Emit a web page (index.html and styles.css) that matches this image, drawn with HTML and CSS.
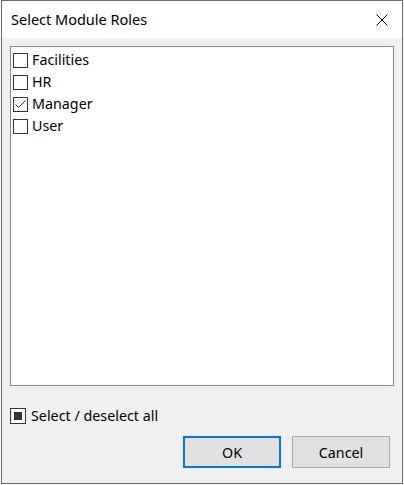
FILE: index.html
```html
<!DOCTYPE html>
<html>
<head>
<meta charset="utf-8">
<link rel="stylesheet" href="styles.css">
</head>
<body>
<div class="window">
  <div class="titlebar">
    <span class="title">Select Module Roles</span>
    <svg class="close" width="12" height="12" viewBox="0 0 12 12"><path d="M0.5 0.5 L11.5 11.5 M11.5 0.5 L0.5 11.5" stroke="#000" stroke-width="1" fill="none"/></svg>
  </div>
  <div class="content">
    <div class="listbox">
      <div class="item"><span class="box"></span><span class="label">Facilities</span></div>
      <div class="item"><span class="box"></span><span class="label">HR</span></div>
      <div class="item"><span class="box"><svg width="13" height="13" viewBox="0 0 13 13"><path d="M1.5 6.5 L4.5 9.5 L11.5 2.5" stroke="#333" stroke-width="1" fill="none"/></svg></span><span class="label">Manager</span></div>
      <div class="item"><span class="box"></span><span class="label">User</span></div>
    </div>
    <div class="selectall"><span class="box partial"><span class="fill"></span></span><span class="label">Select / deselect all</span></div>
    <div class="buttons">
      <div class="btn default">OK</div>
      <div class="btn">Cancel</div>
    </div>
  </div>
</div>
</body>
</html>
```
FILE: styles.css
```css
html, body {
  margin: 0;
  padding: 0;
  background: #ffffff;
}
body {
  font-family: "Noto Sans", "Open Sans", sans-serif;
  font-size: 14.3px;
  color: #000;
}
.window {
  margin-left: 1px;
  width: 402px;
  height: 484px;
  box-sizing: border-box;
  border: 1px solid #6a6a6a;
  background: #f0f0f0;
  display: flex;
  flex-direction: column;
}
.titlebar {
  height: 37px;
  background: #fff;
  display: flex;
  align-items: center;
  justify-content: space-between;
  padding: 0 14px 0 9px;
}
.title {
  font-size: 14.5px;
  line-height: 1;
}
.close { display: block; }
.content {
  padding: 8px 8px 0 8px;
  display: flex;
  flex-direction: column;
}
.listbox {
  height: 340px;
  box-sizing: border-box;
  border: 1px solid #828790;
  background: #fff;
  padding: 2px 2px;
}
.item {
  height: 22px;
  display: flex;
  align-items: center;
}
.box {
  width: 15px;
  height: 15px;
  box-sizing: border-box;
  border: 1px solid #333;
  background: #fff;
  display: flex;
  align-items: center;
  justify-content: center;
  flex: none;
}
.label {
  margin-left: 4px;
  line-height: 1;
}
.selectall {
  margin-top: 22px;
  display: flex;
  align-items: center;
  height: 16px;
}
.selectall .box {
  width: 16px;
  height: 16px;
}
.fill {
  width: 8px;
  height: 8px;
  background: #333;
}
.selectall .label { margin-left: 5px; }
.buttons {
  margin-top: 12px;
  display: flex;
  justify-content: flex-end;
  gap: 11px;
  padding-right: 4px;
}
.btn {
  width: 98px;
  height: 32px;
  box-sizing: border-box;
  border: 1px solid #adadad;
  background: #e1e1e1;
  display: flex;
  align-items: center;
  justify-content: center;
}
.btn.default {
  border: 2px solid #0078d7;
}
```
